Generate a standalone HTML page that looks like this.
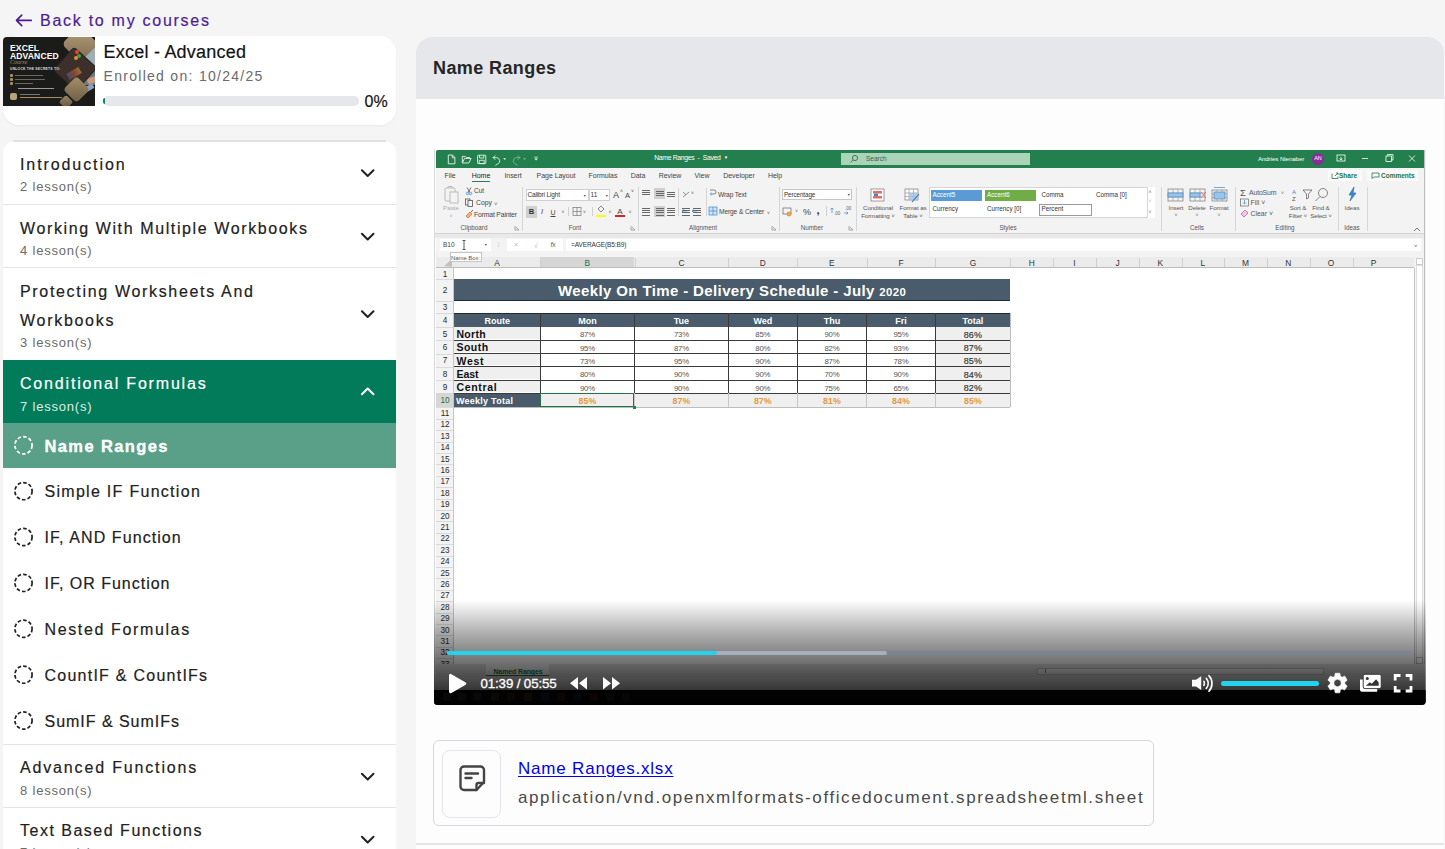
<!DOCTYPE html>
<html><head><meta charset="utf-8"><title>Name Ranges</title>
<style>
html,body{margin:0;padding:0;}
body{width:1445px;height:849px;overflow:hidden;position:relative;background:#f5f5f5;font-family:"Liberation Sans",sans-serif;}
.t{position:absolute;white-space:nowrap;line-height:1;}
.sb{-webkit-text-stroke:0.2px currentColor;}
.r{position:absolute;}
svg{position:absolute;overflow:visible;}
</style></head><body>

<svg style="left:0;top:0" width="40" height="40"><path d="M31.2 20.4H16.8M21.7 15.2L16.5 20.4L21.7 25.6" fill="none" stroke="#4c1d95" stroke-width="1.7" stroke-linecap="round" stroke-linejoin="round"/></svg>
<div class="t sb" style="left:40px;top:12.50px;font-size:16px;color:#4c1d95;letter-spacing:1.724px;">Back to my courses</div>
<div class="r" style="left:3px;top:36px;width:393px;height:88.5px;background:#fff;border-radius:16px;box-shadow:0 1px 2px rgba(0,0,0,0.05);"></div>
<div class="r" style="left:3px;top:37px;width:92px;height:69px;background:#1b1c1a;overflow:hidden;border-radius:4px 0 0 0;"><div class="r" style="left:78px;top:4px;width:16px;height:30px;background:#9fb0b5;"></div><div class="r" style="left:80px;top:34px;width:14px;height:14px;background:#6f7a7c;"></div><div class="r" style="left:64px;top:-6px;width:26px;height:26px;background:linear-gradient(135deg,#b8a27c,#7d6a4e);transform:rotate(45deg);border-radius:5px;"></div><div class="r" style="left:57px;top:17px;width:30px;height:30px;background:#3d2f2c;transform:rotate(42deg);border-radius:3px;box-shadow:0 0 0 1px #2a2220;"></div><div class="r" style="left:64px;top:33px;width:14px;height:7px;background:linear-gradient(90deg,#4a6a8a,#c05a3a,#d8a040);opacity:0.55;transform:rotate(-30deg);"></div><div class="r" style="left:72px;top:13px;width:4px;height:4px;background:#e04a2a;border-radius:50%;"></div><div class="r" style="left:74px;top:17px;width:4px;height:4px;background:#3aa04a;border-radius:50%;"></div><div class="r" style="left:71px;top:19px;width:4px;height:4px;background:#e09030;border-radius:50%;"></div><div class="r" style="left:84px;top:40px;width:12px;height:6px;background:#c89a80;border-radius:4px;transform:rotate(-20deg);"></div><div class="r" style="left:79px;top:49px;width:12px;height:5px;background:#8aa0c0;transform:rotate(-30deg);"></div><div class="r" style="left:64px;top:43px;width:19px;height:19px;background:linear-gradient(135deg,#a58f6a,#6e5d44);transform:rotate(45deg);border-radius:4px;"></div><div class="r" style="left:58px;top:60px;width:10px;height:10px;background:linear-gradient(135deg,#9a8664,#5e5040);transform:rotate(45deg);border-radius:2px;"></div><div class="t" style="left:7px;top:6.5px;font-size:8.6px;font-weight:700;color:#fff;line-height:8px;letter-spacing:0.1px;">EXCEL<br>ADVANCED</div><div class="t" style="left:7px;top:22px;font-size:6px;font-style:italic;color:#a88d60;font-family:'Liberation Serif',serif;">Course</div><div class="t" style="left:7px;top:31px;font-size:3.4px;font-weight:700;color:#ddd;letter-spacing:0.2px;">UNLOCK THE SECRETS TO:</div><div class="r" style="left:7px;top:37px;width:2.5px;height:2.5px;background:#a88d60;border-radius:1px;"></div><div class="r" style="left:12px;top:37.5px;width:28px;height:1.5px;background:#6a675f;"></div><div class="r" style="left:7px;top:41px;width:2.5px;height:2.5px;background:#a88d60;border-radius:1px;"></div><div class="r" style="left:12px;top:41.5px;width:30px;height:1.5px;background:#6a675f;"></div><div class="r" style="left:7px;top:45px;width:2.5px;height:2.5px;background:#a88d60;border-radius:1px;"></div><div class="r" style="left:12px;top:45.5px;width:18px;height:1.5px;background:#6a675f;"></div><div class="r" style="left:15px;top:50.5px;width:36px;height:1.5px;background:#9a9a9a;"></div><div class="r" style="left:7px;top:55.5px;width:7px;height:7px;background:#b8a27c;border-radius:2px;"></div><div class="r" style="left:17px;top:56.5px;width:20px;height:1.3px;background:#777;"></div><div class="r" style="left:17px;top:59.5px;width:42px;height:1.5px;background:#a88d60;"></div></div>
<div class="t sb" style="left:103.5px;top:43.00px;font-size:18px;color:#141414;letter-spacing:0.233px;">Excel - Advanced</div>
<div class="t" style="left:103.5px;top:69.00px;font-size:14px;color:#6b6b6b;letter-spacing:1.29px;">Enrolled on: 10/24/25</div>
<div class="r" style="left:103px;top:96px;width:256px;height:10px;background:#e5e7eb;border-radius:5px;"></div>
<div class="r" style="left:103px;top:97.8px;width:2.3px;height:6.6px;background:#0d8560;border-radius:3px 0 0 3px;"></div>
<div class="t sb" style="left:364.5px;top:93.50px;font-size:16px;color:#141414;">0%</div>
<div class="r" style="left:3px;top:140.5px;width:393px;height:760px;background:#fff;border-radius:12px 12px 0 0;"></div>
<div class="r" style="left:13px;top:140px;width:373px;height:1.6px;background:#dfe1e6;"></div>
<div class="t sb" style="left:20px;top:156.50px;font-size:16px;color:#222;letter-spacing:1.909px;">Introduction</div><div class="t" style="left:20px;top:180.00px;font-size:13px;color:#6b6b6b;letter-spacing:0.8px;">2 lesson(s)</div><svg style="left:0;top:0" width="1" height="1"><path d="M361.9 170.2L367.7 176.0L373.5 170.2" fill="none" stroke="#222" stroke-width="2" stroke-linecap="round" stroke-linejoin="round"/></svg>
<div class="r" style="left:3px;top:204px;width:393px;height:1px;background:#e2e4e8;"></div><div class="t sb" style="left:20px;top:220.50px;font-size:16px;color:#222;letter-spacing:1.613px;">Working With Multiple Workbooks</div><div class="t" style="left:20px;top:244.00px;font-size:13px;color:#6b6b6b;letter-spacing:0.8px;">4 lesson(s)</div><svg style="left:0;top:0" width="1" height="1"><path d="M361.9 233.7L367.7 239.5L373.5 233.7" fill="none" stroke="#222" stroke-width="2" stroke-linecap="round" stroke-linejoin="round"/></svg>
<div class="r" style="left:3px;top:267px;width:393px;height:1px;background:#e2e4e8;"></div><div class="t sb" style="left:20px;top:283.50px;font-size:16px;color:#222;letter-spacing:1.675px;">Protecting Worksheets And</div><div class="t sb" style="left:20px;top:312.50px;font-size:16px;color:#222;letter-spacing:1.713px;">Workbooks</div><div class="t" style="left:20px;top:336.00px;font-size:13px;color:#6b6b6b;letter-spacing:0.8px;">3 lesson(s)</div><svg style="left:0;top:0" width="1" height="1"><path d="M361.9 311.2L367.7 317.0L373.5 311.2" fill="none" stroke="#222" stroke-width="2" stroke-linecap="round" stroke-linejoin="round"/></svg>
<div class="r" style="left:3px;top:360px;width:393px;height:63px;background:#027b5b;"></div><div class="t sb" style="left:20px;top:375.50px;font-size:16px;color:#fff;letter-spacing:1.816px;">Conditional Formulas</div><div class="t" style="left:20px;top:400.00px;font-size:13px;color:#d9efe6;letter-spacing:0.8px;">7 lesson(s)</div><svg style="left:0;top:0" width="1" height="1"><path d="M361.9 394.3L367.7 388.5L373.5 394.3" fill="none" stroke="#fff" stroke-width="2" stroke-linecap="round" stroke-linejoin="round"/></svg>
<div class="r" style="left:3px;top:423px;width:393px;height:45px;background:#5aa088;"></div>
<svg style="left:0;top:0" width="1" height="1"><circle cx="23.5" cy="445.30" r="8.6" fill="none" stroke="#fff" stroke-width="1.7" stroke-dasharray="3.6 2.1"/></svg>
<div class="t sb" style="left:44.5px;top:437.75px;font-size:16.5px;color:#fff;font-weight:700;letter-spacing:1.39px;-webkit-text-stroke:0.35px #fff;">Name Ranges</div>
<svg style="left:0;top:0" width="1" height="1"><circle cx="23.5" cy="491.17" r="8.6" fill="none" stroke="#222" stroke-width="1.7" stroke-dasharray="3.6 2.1"/></svg>
<div class="t sb" style="left:44.5px;top:483.50px;font-size:16px;color:#222;letter-spacing:1.288px;">Simple IF Function</div>
<svg style="left:0;top:0" width="1" height="1"><circle cx="23.5" cy="537.04" r="8.6" fill="none" stroke="#222" stroke-width="1.7" stroke-dasharray="3.6 2.1"/></svg>
<div class="t sb" style="left:44.5px;top:529.50px;font-size:16px;color:#222;letter-spacing:1.08px;">IF, AND Function</div>
<svg style="left:0;top:0" width="1" height="1"><circle cx="23.5" cy="582.91" r="8.6" fill="none" stroke="#222" stroke-width="1.7" stroke-dasharray="3.6 2.1"/></svg>
<div class="t sb" style="left:44.5px;top:575.50px;font-size:16px;color:#222;letter-spacing:0.986px;">IF, OR Function</div>
<svg style="left:0;top:0" width="1" height="1"><circle cx="23.5" cy="628.78" r="8.6" fill="none" stroke="#222" stroke-width="1.7" stroke-dasharray="3.6 2.1"/></svg>
<div class="t sb" style="left:44.5px;top:621.50px;font-size:16px;color:#222;letter-spacing:1.629px;">Nested Formulas</div>
<svg style="left:0;top:0" width="1" height="1"><circle cx="23.5" cy="674.65" r="8.6" fill="none" stroke="#222" stroke-width="1.7" stroke-dasharray="3.6 2.1"/></svg>
<div class="t sb" style="left:44.5px;top:667.50px;font-size:16px;color:#222;letter-spacing:1.247px;">CountIF &amp; CountIFs</div>
<svg style="left:0;top:0" width="1" height="1"><circle cx="23.5" cy="720.52" r="8.6" fill="none" stroke="#222" stroke-width="1.7" stroke-dasharray="3.6 2.1"/></svg>
<div class="t sb" style="left:44.5px;top:713.50px;font-size:16px;color:#222;letter-spacing:0.969px;">SumIF &amp; SumIFs</div>
<div class="r" style="left:3px;top:744px;width:393px;height:1px;background:#e2e4e8;"></div><div class="t sb" style="left:20px;top:759.50px;font-size:16px;color:#222;letter-spacing:1.841px;">Advanced Functions</div><div class="t" style="left:20px;top:784.00px;font-size:13px;color:#6b6b6b;letter-spacing:0.8px;">8 lesson(s)</div><svg style="left:0;top:0" width="1" height="1"><path d="M361.9 773.7L367.7 779.5L373.5 773.7" fill="none" stroke="#222" stroke-width="2" stroke-linecap="round" stroke-linejoin="round"/></svg>
<div class="r" style="left:3px;top:806.5px;width:393px;height:1px;background:#e2e4e8;"></div><div class="t sb" style="left:20px;top:822.50px;font-size:16px;color:#222;letter-spacing:1.5px;">Text Based Functions</div><div class="t" style="left:20px;top:846.00px;font-size:13px;color:#6b6b6b;letter-spacing:0.8px;">7 lesson(s)</div><svg style="left:0;top:0" width="1" height="1"><path d="M361.9 836.7L367.7 842.5L373.5 836.7" fill="none" stroke="#222" stroke-width="2" stroke-linecap="round" stroke-linejoin="round"/></svg>
<div class="r" style="left:416px;top:37px;width:1028px;height:812px;background:#fdfdfd;border-radius:16px 16px 0 0;overflow:hidden;"></div>
<div class="r" style="left:416px;top:37px;width:1028px;height:62px;background:#e5e7eb;border-radius:16px 16px 0 0;"></div>
<div class="t" style="left:433px;top:59.40px;font-size:18px;color:#262626;font-weight:700;letter-spacing:0.4px;">Name Ranges</div>
<div class="r" style="left:0;top:0;width:1445px;height:849px;clip-path:inset(148.5px 19.3px 144px 433.8px round 3px 3px 4px 4px);">
<div class="r" style="left:433.5px;top:148.5px;width:993px;height:557px;background:#d9dadc;"></div>
<div class="r" style="left:434.5px;top:149.2px;width:991.5px;height:556px;background:#fbfbfb;"></div>
<div class="r" style="left:436.3px;top:150.2px;width:988.3px;height:555px;background:#f3f3f3;"></div>
<div class="r" style="left:436.3px;top:150.2px;width:988.3px;height:17.5px;background:#237f4e;border-radius:2px 2px 0 0;"></div>
<svg style="left:0;top:0" width="1" height="1"><g fill="none" stroke="#e8f3ec" stroke-width="0.9" stroke-linejoin="round"><path d="M448.3 155h4.2l2.4 2.5v6.3h-6.6z"/><path d="M452.3 155v2.8h2.6"/><path d="M462.3 163v-6.6h3l1 1.1h3.2v1.4"/><path d="M462.3 163l2.2-4.6h6.6l-2.2 4.6z"/><rect x="477.6" y="155.2" width="8.2" height="8.4" rx="0.6"/><path d="M479.6 155.2v2.8h4.2v-2.8"/><rect x="479.2" y="160.3" width="5" height="3.3"/><path d="M493.2 157.6h3.3a3.3 3.3 0 0 1 1.3 6.3l-2.4 1.4"/><path d="M495.3 155.4l-2.2 2.2 2.2 2.2"/></g><g fill="none" stroke="#7fb596" stroke-width="0.9" stroke-linejoin="round"><path d="M519.8 157.6h-3.3a3.3 3.3 0 0 0 -1.3 6.3l2.4 1.4"/><path d="M517.7 155.4l2.2 2.2-2.2 2.2"/></g><g fill="#e8f3ec"><path d="M503.2 158.3h3l-1.5 1.6z"/><path d="M534.3 156.8h3.6v0.8h-3.6z"/><path d="M534.3 158.6h3.6l-1.8 2z"/></g><path d="M523 158.3h3l-1.5 1.6z" fill="#7fb596"/></svg>
<div class="t" style="left:391px;width:600px;text-align:center;top:155.10px;font-size:6.8px;color:#fff;letter-spacing:-0.3px;">Name Ranges&nbsp;&nbsp;-&nbsp;&nbsp;Saved&nbsp;&nbsp;<span style="font-size:4.5px;vertical-align:1px">▼</span></div>
<div class="r" style="left:841px;top:153px;width:189px;height:12px;background:#a9d4b7;"></div>
<svg style="left:0;top:0" width="1" height="1"><g fill="none" stroke="#3d6b4e" stroke-width="0.9"><circle cx="855" cy="158" r="2.6"/><path d="M853 160l-2.5 2.5"/></g></svg>
<div class="t" style="left:866px;top:155.75px;font-size:6.5px;color:#3f5f49;">Search</div>
<div class="t" style="left:1258px;top:155.90px;font-size:6.2px;color:#fff;letter-spacing:-0.1px;">Andries Nienaber</div>
<div class="r" style="left:1312px;top:152.5px;width:12px;height:12px;border-radius:50%;background:#8e2a9c;"></div>
<div class="t" style="left:1018px;width:600px;text-align:center;top:156.05px;font-size:5.5px;color:#fff;">AN</div>
<svg style="left:0;top:0" width="1" height="1"><g fill="none" stroke="#fff" stroke-width="0.8"><rect x="1337" y="155" width="8" height="6"/><path d="M1341 157v3M1339.5 158.5l1.5 1.5 1.5-1.5"/><path d="M1362 158.5h6"/><rect x="1386" y="156" width="5.5" height="5.5"/><path d="M1387.5 156v-1.5h5.5v5.5h-1.5"/><path d="M1409 155.5l6 6M1415 155.5l-6 6"/></g></svg>
<div class="t" style="left:150px;width:600px;text-align:center;top:172.30px;font-size:7px;color:#444;letter-spacing:-0.05px;">File</div>
<div class="t" style="left:181px;width:600px;text-align:center;top:172.30px;font-size:7px;color:#222;letter-spacing:-0.05px;">Home</div>
<div class="t" style="left:213px;width:600px;text-align:center;top:172.30px;font-size:7px;color:#444;letter-spacing:-0.05px;">Insert</div>
<div class="t" style="left:256px;width:600px;text-align:center;top:172.30px;font-size:7px;color:#444;letter-spacing:-0.05px;">Page Layout</div>
<div class="t" style="left:303px;width:600px;text-align:center;top:172.30px;font-size:7px;color:#444;letter-spacing:-0.05px;">Formulas</div>
<div class="t" style="left:338px;width:600px;text-align:center;top:172.30px;font-size:7px;color:#444;letter-spacing:-0.05px;">Data</div>
<div class="t" style="left:370px;width:600px;text-align:center;top:172.30px;font-size:7px;color:#444;letter-spacing:-0.05px;">Review</div>
<div class="t" style="left:402px;width:600px;text-align:center;top:172.30px;font-size:7px;color:#444;letter-spacing:-0.05px;">View</div>
<div class="t" style="left:439px;width:600px;text-align:center;top:172.30px;font-size:7px;color:#444;letter-spacing:-0.05px;">Developer</div>
<div class="t" style="left:475px;width:600px;text-align:center;top:172.30px;font-size:7px;color:#444;letter-spacing:-0.05px;">Help</div>
<div class="r" style="left:472px;top:180.5px;width:18px;height:1.6px;background:#237f4e;"></div>
<div class="r" style="left:1328px;top:170px;width:34px;height:11px;background:#fafafa;"></div>
<div class="r" style="left:1367px;top:170px;width:51px;height:11px;background:#fafafa;"></div>
<svg style="left:0;top:0" width="1" height="1"><g fill="none" stroke="#217346" stroke-width="0.8"><path d="M1332 173.5v5h6v-2"/><path d="M1335 176l3-3M1336 173h2v2"/><path d="M1372 173h7v4h-5l-2 1.5z"/></g></svg>
<div class="t" style="left:1339px;top:172.75px;font-size:6.5px;color:#217346;font-weight:700;">Share</div>
<div class="t" style="left:1381px;top:172.75px;font-size:6.5px;color:#217346;font-weight:700;">Comments</div>
<div class="r" style="left:521.5px;top:187px;width:0.8px;height:44px;background:#d6d6d6;"></div>
<div class="r" style="left:637.8px;top:187px;width:0.8px;height:44px;background:#d6d6d6;"></div>
<div class="r" style="left:778.5px;top:187px;width:0.8px;height:44px;background:#d6d6d6;"></div>
<div class="r" style="left:855.8px;top:187px;width:0.8px;height:44px;background:#d6d6d6;"></div>
<div class="r" style="left:1160.5px;top:187px;width:0.8px;height:44px;background:#d6d6d6;"></div>
<div class="r" style="left:1234.7px;top:187px;width:0.8px;height:44px;background:#d6d6d6;"></div>
<div class="r" style="left:1337.7px;top:187px;width:0.8px;height:44px;background:#d6d6d6;"></div>
<div class="r" style="left:1367.4px;top:187px;width:0.8px;height:44px;background:#d6d6d6;"></div>
<div class="t" style="left:174px;width:600px;text-align:center;top:224.85px;font-size:6.3px;color:#555;">Clipboard</div>
<div class="t" style="left:275px;width:600px;text-align:center;top:224.85px;font-size:6.3px;color:#555;">Font</div>
<div class="t" style="left:403px;width:600px;text-align:center;top:224.85px;font-size:6.3px;color:#555;">Alignment</div>
<div class="t" style="left:512px;width:600px;text-align:center;top:224.85px;font-size:6.3px;color:#555;">Number</div>
<div class="t" style="left:708px;width:600px;text-align:center;top:224.85px;font-size:6.3px;color:#555;">Styles</div>
<div class="t" style="left:897px;width:600px;text-align:center;top:224.85px;font-size:6.3px;color:#555;">Cells</div>
<div class="t" style="left:985px;width:600px;text-align:center;top:224.85px;font-size:6.3px;color:#555;">Editing</div>
<div class="t" style="left:1052px;width:600px;text-align:center;top:224.85px;font-size:6.3px;color:#555;">Ideas</div>
<svg style="left:0;top:0" width="1" height="1"><g fill="none" stroke="#777" stroke-width="0.6"><path d="M515 226v4h4M516 227l3 3"/></g></svg>
<svg style="left:0;top:0" width="1" height="1"><g fill="none" stroke="#777" stroke-width="0.6"><path d="M631 226v4h4M632 227l3 3"/></g></svg>
<svg style="left:0;top:0" width="1" height="1"><g fill="none" stroke="#777" stroke-width="0.6"><path d="M772 226v4h4M773 227l3 3"/></g></svg>
<svg style="left:0;top:0" width="1" height="1"><g fill="none" stroke="#777" stroke-width="0.6"><path d="M849 226v4h4M850 227l3 3"/></g></svg>
<svg style="left:0;top:0" width="1" height="1"><path d="M1414 231l3-3 3 3" fill="none" stroke="#555" stroke-width="0.8"/></svg>
<svg style="left:0;top:0" width="1" height="1"><g fill="none" stroke="#b5b5b5" stroke-width="0.9"><rect x="445" y="188" width="10" height="13" rx="1"/><rect x="450" y="192" width="8" height="11" fill="#f3f3f3"/><path d="M448 188v-1.5h4v1.5"/></g></svg>
<div class="t" style="left:151px;width:600px;text-align:center;top:205.40px;font-size:6.2px;color:#aaa;">Paste</div>
<div class="t" style="left:151px;width:600px;text-align:center;top:212.50px;font-size:6px;color:#aaa;">˅</div>
<svg style="left:0;top:0" width="1" height="1"><g fill="none" stroke-width="0.8"><path d="M467 187.5l3 5M471 187.5l-3 5" stroke="#555"/><circle cx="467.5" cy="193.5" r="1.2" stroke="#3b8bd0"/><circle cx="470.5" cy="193.5" r="1.2" stroke="#3b8bd0"/><rect x="465.5" y="199" width="4.5" height="6" stroke="#555"/><rect x="468" y="200.5" width="4.5" height="6" stroke="#555" fill="#f3f3f3"/><path d="M466 216l4-4 2 2-4 4z" stroke="#e0702a" fill="#f4b183"/><path d="M471 212l2-2" stroke="#555"/></g></svg>
<div class="t" style="left:474px;top:187.75px;font-size:6.5px;color:#444;">Cut</div>
<div class="t" style="left:476px;top:200.10px;font-size:6.8px;color:#444;">Copy</div>
<div class="t" style="left:494px;top:200.50px;font-size:6px;color:#555;">˅</div>
<div class="t" style="left:474px;top:212.10px;font-size:6.8px;color:#444;letter-spacing:-0.15px;">Format Painter</div>
<div class="r" style="left:525.5px;top:189.3px;width:63px;height:11.3px;background:#fff;box-sizing:border-box;border:0.8px solid #d0d0d0;"></div>
<div class="t" style="left:527.5px;top:192.25px;font-size:6.5px;color:#333;letter-spacing:-0.15px;">Calibri Light</div>
<div class="t" style="left:583px;top:195.20px;font-size:3.6px;color:#555;">▼</div>
<div class="r" style="left:588.5px;top:189.3px;width:21.5px;height:11.3px;background:#fff;box-sizing:border-box;border:0.8px solid #d0d0d0;"></div>
<div class="t" style="left:590.5px;top:192.25px;font-size:6.5px;color:#333;">11</div>
<div class="t" style="left:605px;top:195.20px;font-size:3.6px;color:#555;">▼</div>
<div class="t" style="left:613px;top:191.00px;font-size:9px;color:#444;">A</div>
<div class="t" style="left:620px;top:189.00px;font-size:5px;color:#444;">˄</div>
<div class="t" style="left:625px;top:191.75px;font-size:7.5px;color:#444;">A</div>
<div class="t" style="left:631px;top:189.00px;font-size:5px;color:#444;">˅</div>
<div class="r" style="left:526px;top:205.5px;width:11px;height:12px;background:#cfcfcf;"></div>
<div class="t" style="left:231.5px;width:600px;text-align:center;top:208.25px;font-size:7.5px;color:#333;font-weight:700;">B</div>
<div class="t" style="left:242px;width:600px;text-align:center;top:208.25px;font-size:7.5px;color:#444;font-style:italic;">I</div>
<div class="t" style="left:253px;width:600px;text-align:center;top:208.50px;font-size:7px;color:#444;text-decoration:underline;">U</div>
<div class="t" style="left:263px;width:600px;text-align:center;top:210.00px;font-size:5px;color:#555;">˅</div>
<div class="r" style="left:567.5px;top:207px;width:0.6px;height:9px;background:#d0d0d0;"></div>
<svg style="left:0;top:0" width="1" height="1"><g fill="none" stroke="#777" stroke-width="0.7"><rect x="573" y="207.5" width="8" height="8"/><path d="M577 207.5v8M573 211.5h8"/></g><path d="M598 209l3-3 3 3-3 3z" fill="none" stroke="#555" stroke-width="0.7"/></svg>
<div class="t" style="left:284.5px;width:600px;text-align:center;top:210.00px;font-size:5px;color:#555;">˅</div>
<div class="r" style="left:591.5px;top:207px;width:0.6px;height:9px;background:#d0d0d0;"></div>
<div class="r" style="left:596px;top:215px;width:10px;height:2px;background:#ffff00;"></div>
<div class="t" style="left:310px;width:600px;text-align:center;top:210.00px;font-size:5px;color:#555;">˅</div>
<div class="t" style="left:320px;width:600px;text-align:center;top:207.50px;font-size:8px;color:#444;">A</div>
<div class="r" style="left:615px;top:215px;width:10px;height:2px;background:#e02020;"></div>
<div class="t" style="left:330px;width:600px;text-align:center;top:210.00px;font-size:5px;color:#555;">˅</div>
<div class="r" style="left:654px;top:188px;width:11px;height:11px;background:#cfcfcf;"></div>
<div class="r" style="left:642px;top:190.0px;width:8px;height:0.7px;background:#666;"></div><div class="r" style="left:642px;top:192.2px;width:8px;height:0.7px;background:#666;"></div><div class="r" style="left:642px;top:194.4px;width:8px;height:0.7px;background:#666;"></div>
<div class="r" style="left:655.5px;top:190.5px;width:8px;height:0.7px;background:#666;"></div><div class="r" style="left:655.5px;top:192.7px;width:8px;height:0.7px;background:#666;"></div><div class="r" style="left:655.5px;top:194.9px;width:8px;height:0.7px;background:#666;"></div>
<div class="r" style="left:667px;top:192.0px;width:8px;height:0.7px;background:#666;"></div><div class="r" style="left:667px;top:194.2px;width:8px;height:0.7px;background:#666;"></div><div class="r" style="left:667px;top:196.4px;width:8px;height:0.7px;background:#666;"></div>
<div class="r" style="left:654px;top:206px;width:11px;height:11px;background:#cfcfcf;"></div>
<div class="r" style="left:642px;top:208.0px;width:8px;height:0.7px;background:#666;"></div><div class="r" style="left:642px;top:210.2px;width:8px;height:0.7px;background:#666;"></div><div class="r" style="left:642px;top:212.4px;width:8px;height:0.7px;background:#666;"></div><div class="r" style="left:642px;top:214.6px;width:8px;height:0.7px;background:#666;"></div>
<div class="r" style="left:655.5px;top:208.0px;width:8px;height:0.7px;background:#666;"></div><div class="r" style="left:655.5px;top:210.2px;width:8px;height:0.7px;background:#666;"></div><div class="r" style="left:655.5px;top:212.4px;width:8px;height:0.7px;background:#666;"></div><div class="r" style="left:655.5px;top:214.6px;width:8px;height:0.7px;background:#666;"></div>
<div class="r" style="left:667px;top:208.0px;width:8px;height:0.7px;background:#666;"></div><div class="r" style="left:667px;top:210.2px;width:8px;height:0.7px;background:#666;"></div><div class="r" style="left:667px;top:212.4px;width:8px;height:0.7px;background:#666;"></div><div class="r" style="left:667px;top:214.6px;width:8px;height:0.7px;background:#666;"></div>
<div class="r" style="left:677.5px;top:188px;width:0.6px;height:28px;background:#d4d4d4;"></div>
<svg style="left:0;top:0" width="1" height="1"><g fill="none" stroke="#666" stroke-width="0.7"><path d="M683 197l6-5"/><path d="M683 192l3 3"/></g><g fill="none" stroke="#3b8bd0" stroke-width="0.8"><path d="M682 211h5M683.5 209.5l-1.5 1.5 1.5 1.5M692 211h5M693.5 209.5l-1.5 1.5 1.5 1.5"/></g></svg>
<div class="t" style="left:691px;top:191.00px;font-size:5px;color:#555;">˅</div>
<div class="r" style="left:682px;top:208.0px;width:8px;height:0.7px;background:#666;"></div><div class="r" style="left:682px;top:210.2px;width:8px;height:0.7px;background:#666;"></div><div class="r" style="left:682px;top:212.4px;width:8px;height:0.7px;background:#666;"></div><div class="r" style="left:682px;top:214.6px;width:8px;height:0.7px;background:#666;"></div>
<div class="r" style="left:693px;top:208.0px;width:8px;height:0.7px;background:#666;"></div><div class="r" style="left:693px;top:210.2px;width:8px;height:0.7px;background:#666;"></div><div class="r" style="left:693px;top:212.4px;width:8px;height:0.7px;background:#666;"></div><div class="r" style="left:693px;top:214.6px;width:8px;height:0.7px;background:#666;"></div>
<div class="r" style="left:705.5px;top:188px;width:0.6px;height:28px;background:#d4d4d4;"></div>
<svg style="left:0;top:0" width="1" height="1"><g fill="none" stroke-width="0.7"><path d="M710 190h4a2 2 0 0 1 0 4h-3" stroke="#555"/><path d="M711.5 192.5l-1.5 1.5 1.5 1.5" stroke="#3b8bd0"/><rect x="709" y="207" width="8" height="8" stroke="#3b8bd0" fill="#cfe4f6"/><path d="M713 207v8M709 211h8" stroke="#3b8bd0"/></g></svg>
<div class="t" style="left:718px;top:192.20px;font-size:6.6px;color:#444;letter-spacing:-0.1px;">Wrap Text</div>
<div class="t" style="left:719px;top:209.20px;font-size:6.6px;color:#444;letter-spacing:-0.1px;">Merge &amp; Center</div>
<div class="t" style="left:767px;top:210.50px;font-size:5px;color:#555;">˅</div>
<div class="r" style="left:782px;top:189px;width:70px;height:11px;background:#fff;box-sizing:border-box;border:0.8px solid #c6c6c6;"></div>
<div class="t" style="left:784px;top:191.65px;font-size:6.3px;color:#333;letter-spacing:-0.1px;">Percentage</div>
<div class="t" style="left:847px;top:194.20px;font-size:3.6px;color:#555;">▼</div>
<svg style="left:0;top:0" width="1" height="1"><g fill="none" stroke-width="0.7"><rect x="783" y="208" width="8" height="6" stroke="#666"/><circle cx="789" cy="214" r="2" fill="#f0b040" stroke="#d08020"/><path d="M832 208v5M830.5 209.5l1.5-1.5 1.5 1.5M844 213h4M846.5 211.5l1.5 1.5-1.5 1.5" stroke="#3b8bd0"/></g></svg>
<div class="t" style="left:795px;top:208.50px;font-size:5px;color:#555;">˅</div>
<div class="t" style="left:507px;width:600px;text-align:center;top:207.50px;font-size:9px;color:#444;">%</div>
<div class="t" style="left:518px;width:600px;text-align:center;top:205.00px;font-size:11px;color:#333;font-weight:700;">,</div>
<div class="r" style="left:826px;top:206px;width:0.6px;height:10px;background:#d0d0d0;"></div>
<div class="t" style="left:834px;top:211.75px;font-size:4.5px;color:#666;">.00</div>
<div class="t" style="left:845px;top:206.75px;font-size:4.5px;color:#666;">.00</div>
<svg style="left:0;top:0" width="1" height="1"><g stroke-width="0.7"><rect x="871" y="189" width="13" height="12" fill="#fff" stroke="#777"/><rect x="873" y="191" width="9" height="2.5" fill="#e86a6a"/><rect x="873" y="196" width="9" height="2.5" fill="#e86a6a"/><rect x="874" y="193.5" width="4" height="2.5" fill="#3b8bd0"/><rect x="905" y="189" width="13" height="11" fill="#fff" stroke="#777"/><path d="M905 193h13M905 196.5h13M909 189v11M913.5 189v11" stroke="#999" fill="none"/><rect x="909" y="193" width="9" height="7" fill="#9cc3e6" opacity="0.8"/><path d="M912 202l7-8" stroke="#3b6fa0" fill="none" stroke-width="1.1"/></g></svg>
<div class="t" style="left:578px;width:600px;text-align:center;top:204.90px;font-size:6.2px;color:#555;letter-spacing:-0.1px;">Conditional</div>
<div class="t" style="left:578px;width:600px;text-align:center;top:212.90px;font-size:6.2px;color:#555;letter-spacing:-0.1px;">Formatting ˅</div>
<div class="t" style="left:613px;width:600px;text-align:center;top:204.90px;font-size:6.2px;color:#555;letter-spacing:-0.1px;">Format as</div>
<div class="t" style="left:613px;width:600px;text-align:center;top:212.90px;font-size:6.2px;color:#555;letter-spacing:-0.1px;">Table ˅</div>
<div class="r" style="left:929px;top:186.8px;width:226px;height:31px;background:#fff;box-sizing:border-box;border:0.8px solid #d6d6d6;"></div>
<div class="r" style="left:931px;top:189.5px;width:51px;height:11px;background:#5b9bd5;"></div>
<div class="t" style="left:932.5px;top:191.85px;font-size:6.3px;color:#fff;">Accent5</div>
<div class="r" style="left:985px;top:189.5px;width:51px;height:11px;background:#70ad47;"></div>
<div class="t" style="left:987px;top:191.85px;font-size:6.3px;color:#fff;">Accent6</div>
<div class="t" style="left:1041.5px;top:191.85px;font-size:6.3px;color:#333;">Comma</div>
<div class="t" style="left:1096px;top:191.85px;font-size:6.3px;color:#333;">Comma [0]</div>
<div class="t" style="left:932.5px;top:206.15px;font-size:6.3px;color:#333;">Currency</div>
<div class="t" style="left:987px;top:206.15px;font-size:6.3px;color:#333;">Currency [0]</div>
<div class="r" style="left:1039px;top:203.5px;width:53px;height:12px;background:#fff;box-sizing:border-box;border:0.9px solid #9a9a9a;"></div>
<div class="t" style="left:1041.5px;top:206.15px;font-size:6.3px;color:#333;">Percent</div>
<div class="r" style="left:1146.5px;top:186.8px;width:8.5px;height:31px;background:#fff;box-sizing:border-box;border-left:0.8px solid #d6d6d6;"></div>
<div class="t" style="left:1148.5px;top:189.50px;font-size:5px;color:#666;">˄</div>
<div class="t" style="left:1148.5px;top:198.50px;font-size:5px;color:#bbb;">˅</div>
<div class="t" style="left:1148.5px;top:209.50px;font-size:5px;color:#666;">˅</div>
<svg style="left:0;top:0" width="1" height="1"><g stroke-width="0.7" fill="none"><rect x="1168" y="189" width="15" height="12" stroke="#777"/><path d="M1168 193h15M1168 197h15M1173 189v12M1178 189v12" stroke="#999"/><rect x="1168" y="193" width="15" height="4" fill="#9cc3e6" stroke="#3b8bd0"/><rect x="1190" y="189" width="15" height="12" stroke="#777"/><path d="M1190 193h15M1190 197h15M1195 189v12M1200 189v12" stroke="#999"/><rect x="1190" y="193" width="10" height="4" fill="#9cc3e6" stroke="#3b8bd0"/><path d="M1201 192l5 6M1206 192l-5 6" stroke="#e05050"/><rect x="1212" y="190" width="15" height="11" stroke="#777"/><path d="M1212 194h15M1212 197.5h15M1217 190v11M1222 190v11" stroke="#999"/><rect x="1214" y="192" width="11" height="7" fill="#9cc3e6" stroke="#3b8bd0"/><path d="M1214 187.5h11" stroke="#3b8bd0"/></g></svg>
<div class="t" style="left:876px;width:600px;text-align:center;top:204.90px;font-size:6.2px;color:#555;letter-spacing:-0.1px;">Insert</div>
<div class="t" style="left:876px;width:600px;text-align:center;top:213.00px;font-size:5px;color:#666;">˅</div>
<div class="t" style="left:897px;width:600px;text-align:center;top:204.90px;font-size:6.2px;color:#555;letter-spacing:-0.1px;">Delete</div>
<div class="t" style="left:897px;width:600px;text-align:center;top:213.00px;font-size:5px;color:#666;">˅</div>
<div class="t" style="left:919px;width:600px;text-align:center;top:204.90px;font-size:6.2px;color:#555;letter-spacing:-0.1px;">Format</div>
<div class="t" style="left:919px;width:600px;text-align:center;top:213.00px;font-size:5px;color:#666;">˅</div>
<div class="t" style="left:1240px;top:188.25px;font-size:9.5px;color:#555;">Σ</div>
<div class="t" style="left:1249px;top:189.85px;font-size:6.9px;color:#555;letter-spacing:-0.15px;">AutoSum</div>
<div class="t" style="left:1281px;top:191.00px;font-size:5px;color:#666;">˅</div>
<svg style="left:0;top:0" width="1" height="1"><g stroke-width="0.7" fill="none"><rect x="1240.5" y="199" width="8" height="7" stroke="#666"/><path d="M1244.5 200v4M1243 202.5l1.5 1.5 1.5-1.5" stroke="#3b8bd0"/><path d="M1241 214l4-4 3 3-4 4z" stroke="#c0509c" fill="#f0c8e0"/><path d="M1303 190h9l-3.5 4v4l-2 1v-5z" stroke="#555"/><circle cx="1323" cy="193" r="4.5" stroke="#555"/><path d="M1320 196.5l-4.5 4.5" stroke="#555"/><path d="M1354 187l-5 8h3l-2 6 6-8h-3z" fill="#3b8bd0" stroke="#2a6fb0"/></g></svg>
<div class="t" style="left:1292px;top:188.50px;font-size:6px;color:#3b8bd0;">A</div>
<div class="t" style="left:1292px;top:196.00px;font-size:6px;color:#555;">Z</div>
<div class="t" style="left:1250.5px;top:200.05px;font-size:6.9px;color:#555;">Fill ˅</div>
<div class="t" style="left:1250.5px;top:210.55px;font-size:6.9px;color:#555;">Clear ˅</div>
<div class="t" style="left:998px;width:600px;text-align:center;top:204.90px;font-size:6.2px;color:#555;letter-spacing:-0.1px;">Sort &amp;</div>
<div class="t" style="left:998px;width:600px;text-align:center;top:212.90px;font-size:6.2px;color:#555;letter-spacing:-0.1px;">Filter ˅</div>
<div class="t" style="left:1021px;width:600px;text-align:center;top:204.90px;font-size:6.2px;color:#555;letter-spacing:-0.1px;">Find &amp;</div>
<div class="t" style="left:1021px;width:600px;text-align:center;top:212.90px;font-size:6.2px;color:#555;letter-spacing:-0.1px;">Select ˅</div>
<div class="t" style="left:1052px;width:600px;text-align:center;top:204.90px;font-size:6.2px;color:#555;">Ideas</div>
<div class="r" style="left:435px;top:232.5px;width:990px;height:1px;background:#d4d4d4;"></div>
<div class="r" style="left:435px;top:233.5px;width:990px;height:4px;background:#e9e9e9;"></div>
<div class="r" style="left:440px;top:239px;width:51px;height:12px;background:#fff;"></div>
<div class="t" style="left:443px;top:241.75px;font-size:6.5px;color:#444;">B10</div>
<svg style="left:0;top:0" width="1" height="1"><g stroke="#333" stroke-width="0.8" fill="none"><path d="M464 240.5v9M462.5 240.5h3M462.5 249.5h3"/></g></svg>
<div class="t" style="left:484px;top:244.20px;font-size:3.6px;color:#555;">▼</div>
<div class="t" style="left:497.5px;top:241.75px;font-size:6.5px;color:#bbb;">⁞</div>
<div class="r" style="left:507px;top:239px;width:56px;height:12px;background:#fff;"></div>
<div class="t" style="left:216px;width:600px;text-align:center;top:241.00px;font-size:8px;color:#bbb;">×</div>
<div class="t" style="left:236px;width:600px;text-align:center;top:241.50px;font-size:7px;color:#bbb;">√</div>
<div class="t" style="left:253px;width:600px;text-align:center;top:241.75px;font-size:6.5px;color:#555;"><i>f</i>x</div>
<div class="r" style="left:566px;top:239px;width:855px;height:12px;background:#fff;"></div>
<div class="t" style="left:571px;top:241.75px;font-size:6.5px;color:#333;letter-spacing:-0.1px;">=AVERAGE(B5:B9)</div>
<div class="t" style="left:1414px;top:242.50px;font-size:6px;color:#555;">˅</div>
<div class="r" style="left:435px;top:253px;width:990px;height:4px;background:#f3f3f3;"></div>
<div class="r" style="left:436px;top:257px;width:978px;height:11px;background:#ebebeb;"></div>
<div class="r" style="left:540.3px;top:257px;width:94.2px;height:11px;background:#d6d6d6;"></div>
<div class="r" style="left:540.3px;top:266.5px;width:94.2px;height:1.5px;background:#237f4e;"></div>
<div class="r" style="left:540.3px;top:258px;width:0.7px;height:10px;background:#d0d0d0;"></div>
<div class="t" style="left:197.14999999999998px;width:600px;text-align:center;top:258.80px;font-size:8.4px;color:#333;">A</div>
<div class="r" style="left:634.5px;top:258px;width:0.7px;height:10px;background:#d0d0d0;"></div>
<div class="t" style="left:287.4px;width:600px;text-align:center;top:258.80px;font-size:8.4px;color:#217346;">B</div>
<div class="r" style="left:728.4px;top:258px;width:0.7px;height:10px;background:#d0d0d0;"></div>
<div class="t" style="left:381.45000000000005px;width:600px;text-align:center;top:258.80px;font-size:8.4px;color:#333;">C</div>
<div class="r" style="left:797.3px;top:258px;width:0.7px;height:10px;background:#d0d0d0;"></div>
<div class="t" style="left:462.8499999999999px;width:600px;text-align:center;top:258.80px;font-size:8.4px;color:#333;">D</div>
<div class="r" style="left:866.5px;top:258px;width:0.7px;height:10px;background:#d0d0d0;"></div>
<div class="t" style="left:531.9px;width:600px;text-align:center;top:258.80px;font-size:8.4px;color:#333;">E</div>
<div class="r" style="left:935.4px;top:258px;width:0.7px;height:10px;background:#d0d0d0;"></div>
<div class="t" style="left:600.95px;width:600px;text-align:center;top:258.80px;font-size:8.4px;color:#333;">F</div>
<div class="r" style="left:1010.4px;top:258px;width:0.7px;height:10px;background:#d0d0d0;"></div>
<div class="t" style="left:672.9px;width:600px;text-align:center;top:258.80px;font-size:8.4px;color:#333;">G</div>
<div class="r" style="left:1053px;top:258px;width:0.7px;height:10px;background:#d0d0d0;"></div>
<div class="t" style="left:731.7px;width:600px;text-align:center;top:258.80px;font-size:8.4px;color:#333;">H</div>
<div class="r" style="left:1096px;top:258px;width:0.7px;height:10px;background:#d0d0d0;"></div>
<div class="t" style="left:774.5px;width:600px;text-align:center;top:258.80px;font-size:8.4px;color:#333;">I</div>
<div class="r" style="left:1139px;top:258px;width:0.7px;height:10px;background:#d0d0d0;"></div>
<div class="t" style="left:817.5px;width:600px;text-align:center;top:258.80px;font-size:8.4px;color:#333;">J</div>
<div class="r" style="left:1181.5px;top:258px;width:0.7px;height:10px;background:#d0d0d0;"></div>
<div class="t" style="left:860.25px;width:600px;text-align:center;top:258.80px;font-size:8.4px;color:#333;">K</div>
<div class="r" style="left:1224px;top:258px;width:0.7px;height:10px;background:#d0d0d0;"></div>
<div class="t" style="left:902.75px;width:600px;text-align:center;top:258.80px;font-size:8.4px;color:#333;">L</div>
<div class="r" style="left:1267px;top:258px;width:0.7px;height:10px;background:#d0d0d0;"></div>
<div class="t" style="left:945.5px;width:600px;text-align:center;top:258.80px;font-size:8.4px;color:#333;">M</div>
<div class="r" style="left:1309.5px;top:258px;width:0.7px;height:10px;background:#d0d0d0;"></div>
<div class="t" style="left:988.25px;width:600px;text-align:center;top:258.80px;font-size:8.4px;color:#333;">N</div>
<div class="r" style="left:1352.5px;top:258px;width:0.7px;height:10px;background:#d0d0d0;"></div>
<div class="t" style="left:1031.0px;width:600px;text-align:center;top:258.80px;font-size:8.4px;color:#333;">O</div>
<div class="t" style="left:1073.55px;width:600px;text-align:center;top:258.80px;font-size:8.4px;color:#333;">P</div>
<div class="r" style="left:436px;top:267.2px;width:978px;height:1px;background:#bdbdbd;"></div>
<svg style="left:0;top:0" width="1" height="1"><path d="M444 266.5L452 258.5V266.5Z" fill="#c0c0c0"/></svg>
<div class="r" style="left:454px;top:268px;width:960px;height:400px;background:#fff;"></div>
<div class="r" style="left:436px;top:268px;width:18px;height:400px;background:#f3f3f3;"></div>
<div class="r" style="left:453.3px;top:268px;width:0.7px;height:400px;background:#c6c6c6;"></div>
<div class="r" style="left:436px;top:279.2px;width:17.3px;height:0.6px;background:#dadada;"></div>
<div class="t" style="left:145px;width:600px;text-align:center;top:271.40px;font-size:8.2px;color:#2a2a2a;">1</div>
<div class="r" style="left:436px;top:301px;width:17.3px;height:0.6px;background:#dadada;"></div>
<div class="t" style="left:145px;width:600px;text-align:center;top:287.40px;font-size:8.2px;color:#2a2a2a;">2</div>
<div class="r" style="left:436px;top:313.4px;width:17.3px;height:0.6px;background:#dadada;"></div>
<div class="t" style="left:145px;width:600px;text-align:center;top:304.40px;font-size:8.2px;color:#2a2a2a;">3</div>
<div class="r" style="left:436px;top:326.8px;width:17.3px;height:0.6px;background:#dadada;"></div>
<div class="t" style="left:145px;width:600px;text-align:center;top:317.40px;font-size:8.2px;color:#2a2a2a;">4</div>
<div class="r" style="left:436px;top:340.2px;width:17.3px;height:0.6px;background:#dadada;"></div>
<div class="t" style="left:145px;width:600px;text-align:center;top:331.40px;font-size:8.2px;color:#2a2a2a;">5</div>
<div class="r" style="left:436px;top:353.5px;width:17.3px;height:0.6px;background:#dadada;"></div>
<div class="t" style="left:145px;width:600px;text-align:center;top:344.40px;font-size:8.2px;color:#2a2a2a;">6</div>
<div class="r" style="left:436px;top:366.8px;width:17.3px;height:0.6px;background:#dadada;"></div>
<div class="t" style="left:145px;width:600px;text-align:center;top:357.40px;font-size:8.2px;color:#2a2a2a;">7</div>
<div class="r" style="left:436px;top:380.1px;width:17.3px;height:0.6px;background:#dadada;"></div>
<div class="t" style="left:145px;width:600px;text-align:center;top:371.40px;font-size:8.2px;color:#2a2a2a;">8</div>
<div class="r" style="left:436px;top:393.4px;width:17.3px;height:0.6px;background:#dadada;"></div>
<div class="t" style="left:145px;width:600px;text-align:center;top:384.40px;font-size:8.2px;color:#2a2a2a;">9</div>
<div class="r" style="left:436px;top:393.4px;width:17.3px;height:13.600000000000023px;background:#d6d6d6;"></div>
<div class="r" style="left:436px;top:407px;width:17.3px;height:0.6px;background:#dadada;"></div>
<div class="t" style="left:145px;width:600px;text-align:center;top:397.40px;font-size:8.2px;color:#217346;">10</div>
<div class="r" style="left:436px;top:418.7px;width:17.3px;height:0.6px;background:#dadada;"></div>
<div class="t" style="left:145px;width:600px;text-align:center;top:410.40px;font-size:8.2px;color:#2a2a2a;">11</div>
<div class="r" style="left:436px;top:430.09999999999997px;width:17.3px;height:0.6px;background:#dadada;"></div>
<div class="t" style="left:145px;width:600px;text-align:center;top:421.40px;font-size:8.2px;color:#2a2a2a;">12</div>
<div class="r" style="left:436px;top:441.49999999999994px;width:17.3px;height:0.6px;background:#dadada;"></div>
<div class="t" style="left:145px;width:600px;text-align:center;top:433.40px;font-size:8.2px;color:#2a2a2a;">13</div>
<div class="r" style="left:436px;top:452.8999999999999px;width:17.3px;height:0.6px;background:#dadada;"></div>
<div class="t" style="left:145px;width:600px;text-align:center;top:444.40px;font-size:8.2px;color:#2a2a2a;">14</div>
<div class="r" style="left:436px;top:464.2999999999999px;width:17.3px;height:0.6px;background:#dadada;"></div>
<div class="t" style="left:145px;width:600px;text-align:center;top:456.40px;font-size:8.2px;color:#2a2a2a;">15</div>
<div class="r" style="left:436px;top:475.6999999999999px;width:17.3px;height:0.6px;background:#dadada;"></div>
<div class="t" style="left:145px;width:600px;text-align:center;top:467.40px;font-size:8.2px;color:#2a2a2a;">16</div>
<div class="r" style="left:436px;top:487.09999999999985px;width:17.3px;height:0.6px;background:#dadada;"></div>
<div class="t" style="left:145px;width:600px;text-align:center;top:478.40px;font-size:8.2px;color:#2a2a2a;">17</div>
<div class="r" style="left:436px;top:498.49999999999983px;width:17.3px;height:0.6px;background:#dadada;"></div>
<div class="t" style="left:145px;width:600px;text-align:center;top:490.40px;font-size:8.2px;color:#2a2a2a;">18</div>
<div class="r" style="left:436px;top:509.8999999999998px;width:17.3px;height:0.6px;background:#dadada;"></div>
<div class="t" style="left:145px;width:600px;text-align:center;top:501.40px;font-size:8.2px;color:#2a2a2a;">19</div>
<div class="r" style="left:436px;top:521.2999999999998px;width:17.3px;height:0.6px;background:#dadada;"></div>
<div class="t" style="left:145px;width:600px;text-align:center;top:513.40px;font-size:8.2px;color:#2a2a2a;">20</div>
<div class="r" style="left:436px;top:532.6999999999998px;width:17.3px;height:0.6px;background:#dadada;"></div>
<div class="t" style="left:145px;width:600px;text-align:center;top:524.40px;font-size:8.2px;color:#2a2a2a;">21</div>
<div class="r" style="left:436px;top:544.0999999999998px;width:17.3px;height:0.6px;background:#dadada;"></div>
<div class="t" style="left:145px;width:600px;text-align:center;top:535.40px;font-size:8.2px;color:#2a2a2a;">22</div>
<div class="r" style="left:436px;top:555.4999999999998px;width:17.3px;height:0.6px;background:#dadada;"></div>
<div class="t" style="left:145px;width:600px;text-align:center;top:547.40px;font-size:8.2px;color:#2a2a2a;">23</div>
<div class="r" style="left:436px;top:566.8999999999997px;width:17.3px;height:0.6px;background:#dadada;"></div>
<div class="t" style="left:145px;width:600px;text-align:center;top:558.40px;font-size:8.2px;color:#2a2a2a;">24</div>
<div class="r" style="left:436px;top:578.2999999999997px;width:17.3px;height:0.6px;background:#dadada;"></div>
<div class="t" style="left:145px;width:600px;text-align:center;top:570.40px;font-size:8.2px;color:#2a2a2a;">25</div>
<div class="r" style="left:436px;top:589.6999999999997px;width:17.3px;height:0.6px;background:#dadada;"></div>
<div class="t" style="left:145px;width:600px;text-align:center;top:581.40px;font-size:8.2px;color:#2a2a2a;">26</div>
<div class="r" style="left:436px;top:601.0999999999997px;width:17.3px;height:0.6px;background:#dadada;"></div>
<div class="t" style="left:145px;width:600px;text-align:center;top:592.40px;font-size:8.2px;color:#2a2a2a;">27</div>
<div class="r" style="left:436px;top:612.4999999999997px;width:17.3px;height:0.6px;background:#dadada;"></div>
<div class="t" style="left:145px;width:600px;text-align:center;top:604.40px;font-size:8.2px;color:#2a2a2a;">28</div>
<div class="r" style="left:436px;top:623.8999999999996px;width:17.3px;height:0.6px;background:#dadada;"></div>
<div class="t" style="left:145px;width:600px;text-align:center;top:615.40px;font-size:8.2px;color:#2a2a2a;">29</div>
<div class="r" style="left:436px;top:635.2999999999996px;width:17.3px;height:0.6px;background:#dadada;"></div>
<div class="t" style="left:145px;width:600px;text-align:center;top:627.40px;font-size:8.2px;color:#2a2a2a;">30</div>
<div class="r" style="left:436px;top:646.6999999999996px;width:17.3px;height:0.6px;background:#dadada;"></div>
<div class="t" style="left:145px;width:600px;text-align:center;top:638.40px;font-size:8.2px;color:#2a2a2a;">31</div>
<div class="r" style="left:436px;top:658.0999999999996px;width:17.3px;height:0.6px;background:#dadada;"></div>
<div class="t" style="left:145px;width:600px;text-align:center;top:649.40px;font-size:8.2px;color:#2a2a2a;">32</div>
<div class="r" style="left:436px;top:669.4999999999995px;width:17.3px;height:0.6px;background:#dadada;"></div>
<div class="t" style="left:145px;width:600px;text-align:center;top:661.40px;font-size:8.2px;color:#2a2a2a;">33</div>
<div class="r" style="left:436px;top:680.8999999999995px;width:17.3px;height:0.6px;background:#dadada;"></div>
<div class="t" style="left:145px;width:600px;text-align:center;top:672.40px;font-size:8.2px;color:#2a2a2a;">34</div>
<div class="r" style="left:449.5px;top:252px;width:32px;height:10px;background:#fff;box-sizing:border-box;border:0.7px solid #c4c4c4;"></div>
<div class="t" style="left:451px;top:254.80px;font-size:6px;color:#555;letter-spacing:-0.071px;">Name Box</div>
<div class="r" style="left:454px;top:279.2px;width:556.4px;height:21.8px;background:#4a5b6b;"></div>
<div class="r" style="left:454px;top:299.6px;width:556.4px;height:1.6px;background:#1e2a36;"></div>
<div class="t" style="left:558px;top:283.00px;font-size:15px;color:#fff;font-weight:700;letter-spacing:0.38px;">Weekly On Time - Delivery Schedule - July <span style="font-size:11.4px">2020</span></div>
<div class="r" style="left:454px;top:313.4px;width:556.4px;height:13.4px;background:#4a5b6b;"></div>
<div class="r" style="left:454px;top:312.9px;width:556.4px;height:1.3px;background:#1e2a36;"></div>
<div class="t" style="left:197.14999999999998px;width:600px;text-align:center;top:316.50px;font-size:9px;color:#fff;font-weight:700;">Route</div>
<div class="t" style="left:287.4px;width:600px;text-align:center;top:316.50px;font-size:9px;color:#fff;font-weight:700;">Mon</div>
<div class="t" style="left:381.45000000000005px;width:600px;text-align:center;top:316.50px;font-size:9px;color:#fff;font-weight:700;">Tue</div>
<div class="t" style="left:462.8499999999999px;width:600px;text-align:center;top:316.50px;font-size:9px;color:#fff;font-weight:700;">Wed</div>
<div class="t" style="left:531.9px;width:600px;text-align:center;top:316.50px;font-size:9px;color:#fff;font-weight:700;">Thu</div>
<div class="t" style="left:600.95px;width:600px;text-align:center;top:316.50px;font-size:9px;color:#fff;font-weight:700;">Fri</div>
<div class="t" style="left:672.9px;width:600px;text-align:center;top:316.50px;font-size:9px;color:#fff;font-weight:700;">Total</div>
<div class="r" style="left:454px;top:326.8px;width:86.3px;height:13.399999999999977px;background:#efefef;"></div>
<div class="r" style="left:935.4px;top:326.8px;width:75px;height:13.399999999999977px;background:#efefef;"></div>
<div class="r" style="left:454px;top:340.2px;width:86.3px;height:13.300000000000011px;background:#efefef;"></div>
<div class="r" style="left:935.4px;top:340.2px;width:75px;height:13.300000000000011px;background:#efefef;"></div>
<div class="r" style="left:454px;top:353.5px;width:86.3px;height:13.300000000000011px;background:#efefef;"></div>
<div class="r" style="left:935.4px;top:353.5px;width:75px;height:13.300000000000011px;background:#efefef;"></div>
<div class="r" style="left:454px;top:366.8px;width:86.3px;height:13.300000000000011px;background:#efefef;"></div>
<div class="r" style="left:935.4px;top:366.8px;width:75px;height:13.300000000000011px;background:#efefef;"></div>
<div class="r" style="left:454px;top:380.1px;width:86.3px;height:13.299999999999955px;background:#efefef;"></div>
<div class="r" style="left:935.4px;top:380.1px;width:75px;height:13.299999999999955px;background:#efefef;"></div>
<div class="r" style="left:454px;top:393.4px;width:86.3px;height:13.600000000000023px;background:#4a5b6b;"></div>
<div class="r" style="left:540.3px;top:393.4px;width:470.1px;height:13.600000000000023px;background:#efefef;"></div>
<div class="r" style="left:454px;top:339.7px;width:556.4px;height:1px;background:#3a3a3a;"></div>
<div class="r" style="left:454px;top:338.7px;width:86px;height:0.8px;background:#ffffff;"></div>
<div class="r" style="left:454px;top:353.0px;width:556.4px;height:1px;background:#3a3a3a;"></div>
<div class="r" style="left:454px;top:352.0px;width:86px;height:0.8px;background:#ffffff;"></div>
<div class="r" style="left:454px;top:366.3px;width:556.4px;height:1px;background:#3a3a3a;"></div>
<div class="r" style="left:454px;top:365.3px;width:86px;height:0.8px;background:#ffffff;"></div>
<div class="r" style="left:454px;top:379.6px;width:556.4px;height:1px;background:#3a3a3a;"></div>
<div class="r" style="left:454px;top:378.6px;width:86px;height:0.8px;background:#ffffff;"></div>
<div class="r" style="left:454px;top:392.9px;width:556.4px;height:1px;background:#3a3a3a;"></div>
<div class="r" style="left:454px;top:391.9px;width:86px;height:0.8px;background:#ffffff;"></div>
<div class="t" style="left:456.5px;top:328.75px;font-size:10.5px;color:#111;font-weight:700;letter-spacing:0.275px;">North</div>
<div class="t" style="left:287.4px;width:600px;text-align:center;top:330.60px;font-size:7.8px;color:#555;letter-spacing:-0.2px;">87%</div>
<div class="t" style="left:381.45000000000005px;width:600px;text-align:center;top:330.60px;font-size:7.8px;color:#555;letter-spacing:-0.2px;">73%</div>
<div class="t" style="left:462.8499999999999px;width:600px;text-align:center;top:330.60px;font-size:7.8px;color:#555;letter-spacing:-0.2px;">85%</div>
<div class="t" style="left:531.9px;width:600px;text-align:center;top:330.60px;font-size:7.8px;color:#555;letter-spacing:-0.2px;">90%</div>
<div class="t" style="left:600.95px;width:600px;text-align:center;top:330.60px;font-size:7.8px;color:#555;letter-spacing:-0.2px;">95%</div>
<div class="t" style="left:672.9px;width:600px;text-align:center;top:330.50px;font-size:9px;color:#333;letter-spacing:0.1px;-webkit-text-stroke:0.15px #333;">86%</div>
<div class="t" style="left:456.5px;top:341.75px;font-size:10.5px;color:#111;font-weight:700;letter-spacing:0.475px;">South</div>
<div class="t" style="left:287.4px;width:600px;text-align:center;top:344.60px;font-size:7.8px;color:#555;letter-spacing:-0.2px;">95%</div>
<div class="t" style="left:381.45000000000005px;width:600px;text-align:center;top:344.60px;font-size:7.8px;color:#555;letter-spacing:-0.2px;">87%</div>
<div class="t" style="left:462.8499999999999px;width:600px;text-align:center;top:344.60px;font-size:7.8px;color:#555;letter-spacing:-0.2px;">80%</div>
<div class="t" style="left:531.9px;width:600px;text-align:center;top:344.60px;font-size:7.8px;color:#555;letter-spacing:-0.2px;">82%</div>
<div class="t" style="left:600.95px;width:600px;text-align:center;top:344.60px;font-size:7.8px;color:#555;letter-spacing:-0.2px;">93%</div>
<div class="t" style="left:672.9px;width:600px;text-align:center;top:343.50px;font-size:9px;color:#333;letter-spacing:0.1px;-webkit-text-stroke:0.15px #333;">87%</div>
<div class="t" style="left:456.5px;top:355.75px;font-size:10.5px;color:#111;font-weight:700;letter-spacing:0.733px;">West</div>
<div class="t" style="left:287.4px;width:600px;text-align:center;top:357.60px;font-size:7.8px;color:#555;letter-spacing:-0.2px;">73%</div>
<div class="t" style="left:381.45000000000005px;width:600px;text-align:center;top:357.60px;font-size:7.8px;color:#555;letter-spacing:-0.2px;">95%</div>
<div class="t" style="left:462.8499999999999px;width:600px;text-align:center;top:357.60px;font-size:7.8px;color:#555;letter-spacing:-0.2px;">90%</div>
<div class="t" style="left:531.9px;width:600px;text-align:center;top:357.60px;font-size:7.8px;color:#555;letter-spacing:-0.2px;">87%</div>
<div class="t" style="left:600.95px;width:600px;text-align:center;top:357.60px;font-size:7.8px;color:#555;letter-spacing:-0.2px;">78%</div>
<div class="t" style="left:672.9px;width:600px;text-align:center;top:356.50px;font-size:9px;color:#333;letter-spacing:0.1px;-webkit-text-stroke:0.15px #333;">85%</div>
<div class="t" style="left:456.5px;top:368.75px;font-size:10.5px;color:#111;font-weight:700;letter-spacing:-0.033px;">East</div>
<div class="t" style="left:287.4px;width:600px;text-align:center;top:370.60px;font-size:7.8px;color:#555;letter-spacing:-0.2px;">80%</div>
<div class="t" style="left:381.45000000000005px;width:600px;text-align:center;top:370.60px;font-size:7.8px;color:#555;letter-spacing:-0.2px;">90%</div>
<div class="t" style="left:462.8499999999999px;width:600px;text-align:center;top:370.60px;font-size:7.8px;color:#555;letter-spacing:-0.2px;">90%</div>
<div class="t" style="left:531.9px;width:600px;text-align:center;top:370.60px;font-size:7.8px;color:#555;letter-spacing:-0.2px;">70%</div>
<div class="t" style="left:600.95px;width:600px;text-align:center;top:370.60px;font-size:7.8px;color:#555;letter-spacing:-0.2px;">90%</div>
<div class="t" style="left:672.9px;width:600px;text-align:center;top:370.50px;font-size:9px;color:#333;letter-spacing:0.1px;-webkit-text-stroke:0.15px #333;">84%</div>
<div class="t" style="left:456.5px;top:381.75px;font-size:10.5px;color:#111;font-weight:700;letter-spacing:0.65px;">Central</div>
<div class="t" style="left:287.4px;width:600px;text-align:center;top:384.60px;font-size:7.8px;color:#555;letter-spacing:-0.2px;">90%</div>
<div class="t" style="left:381.45000000000005px;width:600px;text-align:center;top:384.60px;font-size:7.8px;color:#555;letter-spacing:-0.2px;">90%</div>
<div class="t" style="left:462.8499999999999px;width:600px;text-align:center;top:384.60px;font-size:7.8px;color:#555;letter-spacing:-0.2px;">90%</div>
<div class="t" style="left:531.9px;width:600px;text-align:center;top:384.60px;font-size:7.8px;color:#555;letter-spacing:-0.2px;">75%</div>
<div class="t" style="left:600.95px;width:600px;text-align:center;top:384.60px;font-size:7.8px;color:#555;letter-spacing:-0.2px;">65%</div>
<div class="t" style="left:672.9px;width:600px;text-align:center;top:383.50px;font-size:9px;color:#333;letter-spacing:0.1px;-webkit-text-stroke:0.15px #333;">82%</div>
<div class="t" style="left:456px;top:396.50px;font-size:9px;color:#fff;font-weight:700;letter-spacing:0.25px;">Weekly Total</div>
<div class="t" style="left:287.4px;width:600px;text-align:center;top:396.60px;font-size:8.8px;color:#e39a3f;font-weight:700;letter-spacing:0.1px;">85%</div>
<div class="t" style="left:381.45000000000005px;width:600px;text-align:center;top:396.60px;font-size:8.8px;color:#e39a3f;font-weight:700;letter-spacing:0.1px;">87%</div>
<div class="t" style="left:462.8499999999999px;width:600px;text-align:center;top:396.60px;font-size:8.8px;color:#e39a3f;font-weight:700;letter-spacing:0.1px;">87%</div>
<div class="t" style="left:531.9px;width:600px;text-align:center;top:396.60px;font-size:8.8px;color:#e39a3f;font-weight:700;letter-spacing:0.1px;">81%</div>
<div class="t" style="left:600.95px;width:600px;text-align:center;top:396.60px;font-size:8.8px;color:#e39a3f;font-weight:700;letter-spacing:0.1px;">84%</div>
<div class="t" style="left:672.9px;width:600px;text-align:center;top:396.60px;font-size:8.8px;color:#e39a3f;font-weight:700;letter-spacing:0.1px;">85%</div>
<div class="r" style="left:454px;top:406.7px;width:556.4px;height:0.8px;background:#bdbdbd;"></div>
<div class="r" style="left:539.9px;top:313.4px;width:0.9px;height:80px;background:#3a3a3a;"></div>
<div class="r" style="left:539.9px;top:393.4px;width:0.9px;height:14px;background:#c8c8c8;"></div>
<div class="r" style="left:634.1px;top:313.4px;width:0.9px;height:80px;background:#3a3a3a;"></div>
<div class="r" style="left:634.1px;top:393.4px;width:0.9px;height:14px;background:#c8c8c8;"></div>
<div class="r" style="left:728.0px;top:313.4px;width:0.9px;height:80px;background:#3a3a3a;"></div>
<div class="r" style="left:728.0px;top:393.4px;width:0.9px;height:14px;background:#c8c8c8;"></div>
<div class="r" style="left:796.9px;top:313.4px;width:0.9px;height:80px;background:#3a3a3a;"></div>
<div class="r" style="left:796.9px;top:393.4px;width:0.9px;height:14px;background:#c8c8c8;"></div>
<div class="r" style="left:866.1px;top:313.4px;width:0.9px;height:80px;background:#3a3a3a;"></div>
<div class="r" style="left:866.1px;top:393.4px;width:0.9px;height:14px;background:#c8c8c8;"></div>
<div class="r" style="left:935.0px;top:313.4px;width:0.9px;height:80px;background:#3a3a3a;"></div>
<div class="r" style="left:935.0px;top:393.4px;width:0.9px;height:14px;background:#c8c8c8;"></div>
<div class="r" style="left:1010px;top:313.4px;width:0.9px;height:94px;background:#bdbdbd;"></div>
<div class="r" style="left:540.3px;top:393.4px;width:94.2px;height:13.8px;background:transparent;box-sizing:border-box;border:1.2px solid #217346;"></div>
<div class="r" style="left:633px;top:405.5px;width:3px;height:3px;background:#237f4e;"></div>
<div class="r" style="left:1414px;top:257px;width:11px;height:410px;background:#f3f3f3;"></div>
<div class="r" style="left:1413.5px;top:268px;width:0.8px;height:400px;background:#c6c6c6;"></div>
<div class="r" style="left:1415.5px;top:258px;width:7px;height:7px;background:#fff;box-sizing:border-box;border:0.6px solid #ccc;"></div>
<div class="r" style="left:1415.5px;top:265px;width:7px;height:395px;background:#fff;box-sizing:border-box;border:0.6px solid #ddd;"></div>
<div class="r" style="left:1424.3px;top:150px;width:1px;height:555px;background:#bdbdbd;"></div>
<div class="r" style="left:436px;top:664px;width:989px;height:13px;background:#e6e6e6;"></div>
<div class="r" style="left:486px;top:664px;width:63px;height:12px;background:#fff;"></div>
<div class="t" style="left:218px;width:600px;text-align:center;top:668.60px;font-size:6.8px;color:#217346;font-weight:700;">Named Ranges</div>
<div class="r" style="left:486px;top:675px;width:63px;height:1px;background:#237f4e;"></div>
<div class="r" style="left:1037px;top:667.5px;width:287px;height:7px;background:#fafafa;box-sizing:border-box;border:0.7px solid #c8c8c8;"></div>
<div class="r" style="left:1045px;top:669px;width:1px;height:4px;background:#888;"></div>
<div class="r" style="left:1415.5px;top:657px;width:7px;height:7px;background:#fff;box-sizing:border-box;border:0.6px solid #bbb;"></div>
<div class="r" style="left:436px;top:677px;width:989px;height:13px;background:#f0f0f0;"></div>
<div class="r" style="left:434px;top:690px;width:992px;height:15px;background:#0a0a0a;"></div>
<div class="r" style="left:443px;top:693px;width:8px;height:8px;background:#777;opacity:0.35;border-radius:1px;"></div>
<div class="r" style="left:458px;top:693px;width:8px;height:8px;background:#777;opacity:0.35;border-radius:1px;"></div>
<div class="r" style="left:473px;top:693px;width:8px;height:8px;background:#777;opacity:0.35;border-radius:1px;"></div>
<div class="r" style="left:491px;top:693px;width:8px;height:8px;background:#b08a30;opacity:0.35;border-radius:1px;"></div>
<div class="r" style="left:507px;top:693px;width:8px;height:8px;background:#b04030;opacity:0.35;border-radius:1px;"></div>
<div class="r" style="left:524px;top:693px;width:8px;height:8px;background:#c08a20;opacity:0.35;border-radius:1px;"></div>
<div class="r" style="left:541px;top:693px;width:8px;height:8px;background:#2a70b0;opacity:0.35;border-radius:1px;"></div>
<div class="r" style="left:557px;top:693px;width:8px;height:8px;background:#a05040;opacity:0.35;border-radius:1px;"></div>
<div class="r" style="left:573px;top:693px;width:8px;height:8px;background:#2a5a9a;opacity:0.35;border-radius:1px;"></div>
<div class="r" style="left:590px;top:693px;width:8px;height:8px;background:#c04020;opacity:0.35;border-radius:1px;"></div>
<div class="r" style="left:606px;top:693px;width:8px;height:8px;background:#217346;opacity:0.35;border-radius:1px;"></div>
<div class="r" style="left:622px;top:693px;width:8px;height:8px;background:#555;opacity:0.35;border-radius:1px;"></div>
<div class="r" style="left:434px;top:599.5px;width:992px;height:106px;background:linear-gradient(to bottom, rgba(0,0,0,0) 0%, rgba(0,0,0,0.3) 30%, rgba(0,0,0,0.55) 58%, rgba(0,0,0,0.78) 85%, rgba(0,0,0,0.9) 100%);"></div>
<div class="r" style="left:447px;top:650.5px;width:966px;height:4.4px;background:rgba(120,130,150,0.7);border-radius:3px;"></div>
<div class="r" style="left:447px;top:650.5px;width:440px;height:4.4px;background:rgba(175,182,200,0.85);border-radius:3px;"></div>
<div class="r" style="left:447px;top:650.5px;width:270px;height:4.4px;background:#22d3ee;border-radius:3px;"></div>
<svg style="left:0;top:0" width="1" height="1"><g fill="#fff"><path d="M449 676Q449 672.8 451.8 674.4L465.3 682.2Q467.5 683.6 465.3 685L451.8 692.8Q449 694.4 449 691.2Z"/><path d="M578 677L570 683.3L578 689.6Z"/><path d="M587 677L579 683.3L587 689.6Z"/><path d="M603 677L611 683.3L603 689.6Z"/><path d="M612 677L620 683.3L612 689.6Z"/><path d="M1192 679.7h4l5.2-3.5v13.7l-5.2-3.3h-4z"/></g><g fill="none" stroke="#fff" stroke-width="1.7" stroke-linecap="round"><path d="M1203.92 681.42A3.95 3.95 0 0 1 1203.92 685.38"/><path d="M1206.36 678.48A7.65 7.65 0 0 1 1206.36 688.32"/><path d="M1209.01 675.74A11.45 11.45 0 0 1 1209.01 691.06"/></g></svg>
<div class="t" style="left:480.5px;top:676.85px;font-size:13.3px;color:#fff;letter-spacing:-0.125px;-webkit-text-stroke:0.3px #fff;">01:39 / 05:55</div>
<div class="r" style="left:1220.8px;top:680.8px;width:98.7px;height:5.2px;background:#22d3ee;border-radius:3px;"></div>
<svg style="left:0;top:0" width="1" height="1"><g transform="translate(1325.3 670.8) scale(1.02)"><path d="M19.14,12.94c0.04-0.3,0.06-0.61,0.06-0.94c0-0.32-0.02-0.64-0.07-0.94l2.03-1.58c0.18-0.14,0.23-0.41,0.12-0.61l-1.92-3.32c-0.12-0.22-0.37-0.29-0.59-0.22l-2.39,0.96c-0.5-0.38-1.03-0.7-1.62-0.94L14.4,2.81c-0.04-0.24-0.24-0.41-0.48-0.41h-3.84c-0.24,0-0.43,0.17-0.47,0.41L9.25,5.35C8.66,5.59,8.12,5.92,7.63,6.29L5.24,5.33c-0.22-0.08-0.47,0-0.59,0.22L2.74,8.87C2.62,9.08,2.66,9.34,2.86,9.48l2.03,1.58C4.84,11.36,4.8,11.69,4.8,12s0.02,0.64,0.07,0.94l-2.03,1.58c-0.18,0.14-0.23,0.41-0.12,0.61l1.92,3.32c0.12,0.22,0.37,0.29,0.59,0.22l2.39-0.96c0.5,0.38,1.03,0.7,1.62,0.94l0.36,2.54c0.05,0.24,0.24,0.41,0.48,0.41h3.84c0.24,0,0.44-0.17,0.47-0.41l0.36-2.54c0.59-0.24,1.13-0.56,1.62-0.94l2.39,0.96c0.22,0.08,0.47,0,0.59-0.22l1.92-3.32c0.12-0.22,0.07-0.47-0.12-0.61L19.14,12.94z M12,15.6c-1.98,0-3.6-1.62-3.6-3.6s1.62-3.6,3.6-3.6s3.6,1.62,3.6,3.6S13.98,15.6,12,15.6z" fill="#fff" stroke="#fff" stroke-width="0.6"/></g></svg>
<svg style="left:0;top:0" width="1" height="1"><path d="M1360 679.5h3.4v8.8h13.8v3.4h-15.2a2 2 0 0 1 -2 -2z" fill="#fff"/><rect x="1363.2" y="674.3" width="18" height="14.3" rx="1.8" fill="#fff" stroke="#2f2f2f" stroke-width="0.9"/><circle cx="1367.3" cy="678.6" r="1.5" fill="#333"/><path d="M1365.8 685.8l4-3.6 2 1.6 4.3-4.6 2.6 3.2v3.4z" fill="#333"/></svg>
<svg style="left:0;top:0" width="1" height="1"><g fill="none" stroke="#fff" stroke-width="2.8" stroke-linecap="butt"><path d="M1395.2 680.5v-5h5.3M1405.7 675.5h5.3v5M1411 686v5h-5.3M1400.5 691h-5.3v-5"/></g></svg>
</div>
<div class="r" style="left:433px;top:740.2px;width:720.5px;height:86.3px;background:#fdfdfd;box-sizing:border-box;border:1px solid #d5d8de;border-radius:6px;"></div>
<div class="r" style="left:442px;top:749.5px;width:59px;height:68px;background:#fdfdfd;box-sizing:border-box;border:1px solid #e3e5e9;border-radius:8px;"></div>
<svg style="left:0;top:0" width="1" height="1"><g fill="none" stroke="#444" stroke-width="2.4" stroke-linejoin="round" stroke-linecap="round"><path d="M464 766.5H480.5A3.5 3.5 0 0 1 484 770V782L476.5 790H464A3.5 3.5 0 0 1 460.5 786.5V770A3.5 3.5 0 0 1 464 766.5Z"/><path d="M465.5 773.5H478M465.5 778H471.5"/><path d="M476.5 790V785A2 2 0 0 1 478.5 783H484"/></g></svg>
<div class="t" style="left:518px;top:760.30px;font-size:17px;color:#0000ee;letter-spacing:0.8px;text-decoration:underline;text-underline-offset:2px;">Name Ranges.xlsx</div>
<div class="t" style="left:518px;top:789.30px;font-size:17px;color:#4a4a4a;letter-spacing:1.6px;">application/vnd.openxmlformats-officedocument.spreadsheetml.sheet</div>
<div class="r" style="left:416px;top:843px;width:1028px;height:1.5px;background:#e3e5e9;"></div>
</body></html>
